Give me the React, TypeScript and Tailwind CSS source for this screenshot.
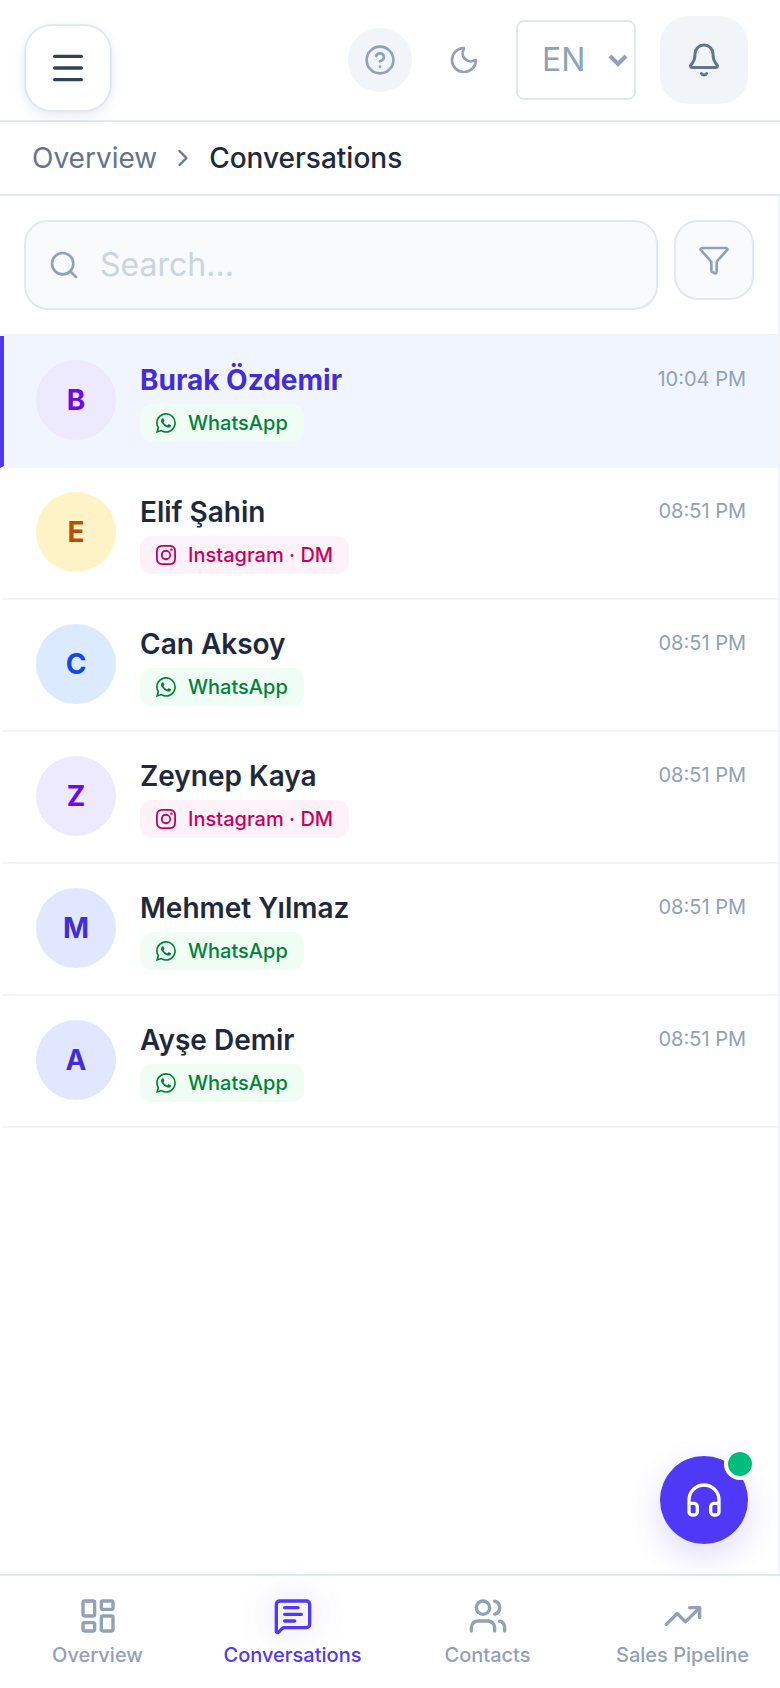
import React, { useState } from 'react'
import {
  Bell,
  ChevronRight,
  CircleHelp,
  Funnel,
  Headphones,
  LayoutDashboard,
  Menu,
  MessageSquareText,
  Moon,
  Search,
  TrendingUp,
  Users,
} from 'lucide-react'
import { BsInstagram, BsWhatsapp } from 'react-icons/bs'
import clsx from 'clsx'

type Channel = 'whatsapp' | 'instagram'

interface Conversation {
  id: number
  name: string
  channel: Channel
  time: string
  avatar: string
}

const conversations: Conversation[] = [
  { id: 1, name: 'Burak Özdemir', channel: 'whatsapp', time: '10:04 PM', avatar: 'bg-violet-100 text-violet-700' },
  { id: 2, name: 'Elif Şahin', channel: 'instagram', time: '08:51 PM', avatar: 'bg-amber-100 text-amber-700' },
  { id: 3, name: 'Can Aksoy', channel: 'whatsapp', time: '08:51 PM', avatar: 'bg-blue-100 text-blue-700' },
  { id: 4, name: 'Zeynep Kaya', channel: 'instagram', time: '08:51 PM', avatar: 'bg-violet-100 text-violet-700' },
  { id: 5, name: 'Mehmet Yılmaz', channel: 'whatsapp', time: '08:51 PM', avatar: 'bg-indigo-100 text-indigo-700' },
  { id: 6, name: 'Ayşe Demir', channel: 'whatsapp', time: '08:51 PM', avatar: 'bg-indigo-100 text-indigo-700' },
]

const navItems = [
  { label: 'Overview', icon: LayoutDashboard },
  { label: 'Conversations', icon: MessageSquareText },
  { label: 'Contacts', icon: Users },
  { label: 'Sales Pipeline', icon: TrendingUp },
]

function Header() {
  const [lang, setLang] = useState('EN')

  return (
    <header className="flex h-[122px] items-start justify-between border-b-2 border-slate-200 px-6 pt-4">
      <button
        aria-label="Open menu"
        className="mt-2 flex size-22 items-center justify-center rounded-[28px] border-2 border-slate-200 bg-white text-slate-700 shadow-[0_4px_12px_rgba(100,116,180,0.14)]"
      >
        <Menu size={40} />
      </button>
      <div className="flex items-center pr-2">
        <button
          aria-label="Help"
          className="flex size-16 items-center justify-center rounded-full bg-slate-100 text-slate-400"
        >
          <CircleHelp size={32} />
        </button>
        <button
          aria-label="Dark mode"
          className="ml-5 flex size-16 items-center justify-center rounded-full text-slate-400"
        >
          <Moon size={32} />
        </button>
        <div className="relative ml-5">
          <select
            aria-label="Language"
            value={lang}
            onChange={e => setLang(e.target.value)}
            className="h-20 w-30 appearance-none rounded-lg border-2 border-slate-200 bg-white pl-6 text-[32px] text-slate-400"
          >
            <option value="EN">EN</option>
            <option value="TR">TR</option>
          </select>
          <svg
            viewBox="0 0 20 14"
            className="pointer-events-none absolute top-[33px] right-2 h-[14px] w-5 fill-none stroke-slate-400 stroke-4"
          >
            <path d="M2 3l8 8 8-8" />
          </svg>
        </div>
        <button
          aria-label="Notifications"
          className="ml-6 flex size-22 items-center justify-center rounded-[28px] bg-slate-100 text-slate-500"
        >
          <Bell size={36} />
        </button>
      </div>
    </header>
  )
}

function Breadcrumb() {
  return (
    <nav
      aria-label="Breadcrumb"
      className="flex h-[74px] items-center gap-3 border-b-2 border-slate-200 px-8 text-[28px]"
    >
      <a href="#overview" className="text-slate-500">
        Overview
      </a>
      <ChevronRight size={28} className="text-slate-500" />
      <span className="font-medium text-slate-800">Conversations</span>
    </nav>
  )
}

function SearchBar() {
  return (
    <div className="flex items-start gap-4 border-b-2 border-slate-100 p-6">
      <label className="flex h-[90px] flex-1 items-center gap-5 rounded-3xl border-2 border-slate-200 bg-slate-50 px-[22px]">
        <Search size={32} className="shrink-0 text-slate-400" />
        <input
          type="text"
          aria-label="Search"
          placeholder="Search..."
          className="w-full min-w-0 bg-transparent text-[32px] text-slate-700 outline-none placeholder:text-slate-300"
        />
      </label>
      <button
        aria-label="Filter"
        className="flex size-20 items-center justify-center rounded-3xl border-2 border-slate-200 bg-slate-50 text-slate-400"
      >
        <Funnel size={32} />
      </button>
    </div>
  )
}

function ChannelBadge({ channel }: { channel: Channel }) {
  const isWhatsapp = channel === 'whatsapp'
  const Icon = isWhatsapp ? BsWhatsapp : BsInstagram

  return (
    <span
      className={clsx(
        'mt-1 inline-flex h-[38px] items-center gap-3 rounded-xl px-4 text-xl font-medium',
        isWhatsapp ? 'bg-green-50 text-green-700' : 'bg-pink-50 text-pink-700'
      )}
    >
      <Icon size={20} />
      {isWhatsapp ? 'WhatsApp' : 'Instagram · DM'}
    </span>
  )
}

function ConversationRow({
  item,
  active,
  onSelect,
}: {
  item: Conversation
  active: boolean
  onSelect: () => void
}) {
  return (
    <li>
      <button
        onClick={onSelect}
        className={clsx(
          'flex w-full items-start gap-6 border-b-2 border-l-4 border-b-slate-100 px-8 py-6 text-left',
          active ? 'border-l-indigo-600 bg-[#f0f5ff]' : 'border-l-transparent'
        )}
      >
        <span
          className={clsx(
            'flex size-20 shrink-0 items-center justify-center rounded-full text-[28px] font-bold',
            item.avatar
          )}
        >
          {item.name[0]}
        </span>
        <span className="flex min-w-0 flex-1 flex-col items-start">
          <span
            className={clsx(
              'text-[28px] leading-10',
              active ? 'font-bold text-indigo-700' : 'font-semibold text-slate-800'
            )}
          >
            {item.name}
          </span>
          <ChannelBadge channel={item.channel} />
        </span>
        <span className="text-xl leading-[38px] text-slate-400">{item.time}</span>
      </button>
    </li>
  )
}

function BottomNav() {
  return (
    <nav
      aria-label="Main"
      className="grid h-[114px] grid-cols-4 border-t-2 border-slate-200 bg-white"
    >
      {navItems.map(({ label, icon: Icon }) => {
        const active = label === 'Conversations'
        return (
          <a
            key={label}
            href="#"
            aria-current={active ? 'page' : undefined}
            className={clsx(
              'flex flex-col items-center gap-[5px] pt-5 text-xl font-medium whitespace-nowrap',
              active ? 'text-indigo-600' : 'text-slate-400'
            )}
          >
            <Icon
              size={40}
              className={clsx(
                'overflow-visible',
                active && 'drop-shadow-[0_0_16px_rgba(79,57,246,0.3)]'
              )}
            />
            {label}
          </a>
        )
      })}
    </nav>
  )
}

export default function App() {
  const [selected, setSelected] = useState(1)

  return (
    <div className="flex min-h-screen flex-col bg-white font-['Inter',sans-serif]">
      <Header />
      <Breadcrumb />
      <main className="flex-1 border-r-2 border-slate-100">
        <SearchBar />
        <ul>
          {conversations.map(item => (
            <ConversationRow
              key={item.id}
              item={item}
              active={item.id === selected}
              onSelect={() => setSelected(item.id)}
            />
          ))}
        </ul>
      </main>
      <BottomNav />

      <button
        aria-label="Support"
        className="fixed right-8 bottom-36 flex size-22 items-center justify-center rounded-full bg-indigo-600 text-white shadow-[0_12px_32px_rgba(79,57,246,0.18)]"
      >
        <Headphones size={40} />
        <span className="absolute -top-2 -right-2 size-8 rounded-full border-4 border-white bg-emerald-500" />
      </button>
    </div>
  )
}
